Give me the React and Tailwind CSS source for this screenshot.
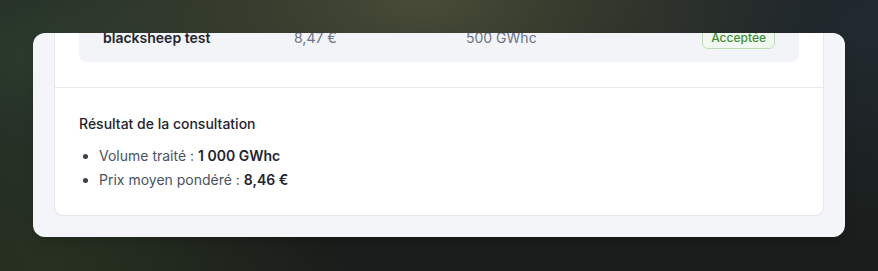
import React from 'react';

const offers = [
  { name: 'blacksheep test', price: '8,47 €', volume: '500 GWhc', status: 'Acceptée' },
];

export default function App() {
  return (
    <div
      className="h-screen w-full p-[33px] font-['Inter','Liberation_Sans',sans-serif] bg-[#191d1b] bg-[radial-gradient(ellipse_45%_70%_at_48%_0%,#484c37_0%,rgba(72,76,55,0)_100%),radial-gradient(ellipse_40%_80%_at_5%_20%,#2c3b2d_0%,rgba(44,59,45,0)_100%),radial-gradient(ellipse_35%_70%_at_5%_100%,#283120_0%,rgba(40,49,32,0)_100%),radial-gradient(ellipse_40%_80%_at_100%_10%,#222a30_0%,rgba(34,42,48,0)_100%)]"
    >
      <div className="overflow-hidden rounded-xl bg-[#f4f5f9] px-[22px] pb-[22px] shadow-lg">
        <div className="-mt-[18px] rounded-lg bg-white shadow-[0_0_0_1px_#e6e7ec,0_1px_2px_rgba(0,0,0,0.06)]">
          {/* OFFERS LIST */}
          <div className="px-6 pb-[25px]">
            {offers.map((o) => (
              <div
                key={o.name}
                className="grid grid-cols-[191px_172px_1fr_auto] items-center rounded-lg bg-[#f3f4f8] px-6 pb-[13px] pt-3 text-sm"
              >
                <span className="font-semibold text-[#1f2430]">{o.name}</span>
                <span className="text-[#6b7385]">{o.price}</span>
                <span className="text-[#6b7385]">{o.volume}</span>
                <span className="rounded-md border border-[#bfdcb9] bg-[#f1f8ef] px-2 py-[2px] text-xs font-medium text-[#3e8b3a]">
                  {o.status}
                </span>
              </div>
            ))}
          </div>

          {/* RESULT SUMMARY */}
          <div className="border-t border-[#e8e9ee] px-6 pb-[25px] pt-[26px] text-sm">
            <h4 className="mb-3 font-medium text-[#1f2430]">Résultat de la consultation</h4>
            <ul className="list-disc space-y-1 pl-5 text-[#4b5260] marker:text-[#3a3f4a]">
              <li>
                Volume traité : <span className="font-semibold text-[#1f2430]">1 000 GWhc</span>
              </li>
              <li>
                Prix moyen pondéré : <span className="font-semibold text-[#1f2430]">8,46 €</span>
              </li>
            </ul>
          </div>
        </div>
      </div>
    </div>
  );
}
